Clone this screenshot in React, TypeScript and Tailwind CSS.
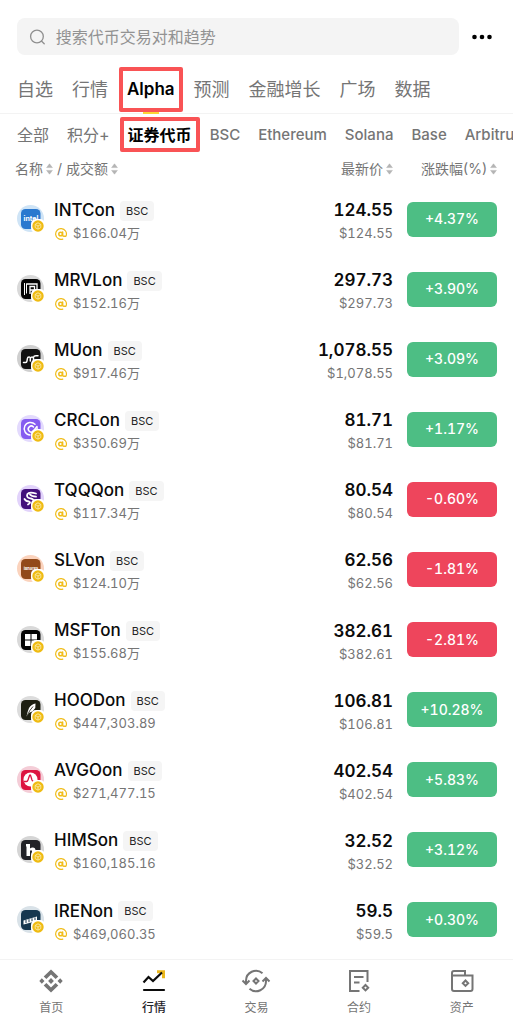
import type { ReactNode } from "react";

const tabs = ["自选", "行情", "Alpha", "预测", "金融增长", "广场", "数据"];

const filters = [
  { label: "全部", cjk: true },
  { label: "积分+", cjk: true },
  { label: "证券代币", cjk: true, active: true },
  { label: "BSC" },
  { label: "Ethereum" },
  { label: "Solana" },
  { label: "Base" },
  { label: "Arbitrum" },
];

type Token = {
  name: string;
  volume: string;
  price: string;
  change: string;
  halo: string;
  tile: string;
  glyph: ReactNode;
};

const tokens: Token[] = [
  {
    name: "INTCon",
    volume: "$166.04万",
    price: "124.55",
    change: "+4.37%",
    halo: "#cfe4f6",
    tile: "#2a78cf",
    glyph: (
      <text
        x="14"
        y="16"
        fontSize="7"
        fontWeight="700"
        fill="#fff"
        textAnchor="middle"
      >
        intel
      </text>
    ),
  },
  {
    name: "MRVLon",
    volume: "$152.16万",
    price: "297.73",
    change: "+3.90%",
    halo: "#d9d9d9",
    tile: "#050505",
    glyph: (
      <g fill="none" stroke="#fff">
        <path d="M7.500 8v12M9.500 8.500v10" strokeWidth="1" />
        <path d="M9.500 9H20v7M13 19v-7.500h4.500V15H13" strokeWidth="1.300" />
      </g>
    ),
  },
  {
    name: "MUon",
    volume: "$917.46万",
    price: "1,078.55",
    change: "+3.09%",
    halo: "#cfcfcf",
    tile: "#111111",
    glyph: (
      <path
        d="M6.500 17.500h2q1.300 0 1.500-1.600l.4-2.400q.2-1.500 1.600-1.500t1.300 1.500V16M13.300 14q.2-2 1.700-2t1.500 1.600v2M16.500 12.500q.3-1.800 2.500-1.800h2"
        fill="none"
        stroke="#fff"
        strokeWidth="1.500"
        strokeLinecap="round"
      />
    ),
  },
  {
    name: "CRCLon",
    volume: "$350.69万",
    price: "81.71",
    change: "+1.17%",
    halo: "#e3dafd",
    tile: "#855cf0",
    glyph: (
      <g fill="none" stroke="#fff" strokeWidth="1.500" strokeLinecap="round">
        <path d="M18 9.300a6.300 6.300 0 1 0-5 10.700" />
        <path d="M16.500 12a3 3 0 1 0-.2 4.300L20 11.500" />
        <path d="M20 12.500a6 6 0 0 1-.5 4" />
      </g>
    ),
  },
  {
    name: "TQQQon",
    volume: "$117.34万",
    price: "80.54",
    change: "-0.60%",
    halo: "#e2d3fb",
    tile: "#43107c",
    glyph: (
      <path
        d="M19 8.500q-7-2-8.500.5-1.500 3 2 4.200 4.500.8 4.500 3.300M7.500 14q1.500 2.500 4.500 2.500 2.500 1-1 3M13 9.500q1.500 2 6 2.200"
        fill="none"
        stroke="#fff"
        strokeWidth="1.800"
        strokeLinecap="round"
      />
    ),
  },
  {
    name: "SLVon",
    volume: "$124.10万",
    price: "62.56",
    change: "-1.81%",
    halo: "#fbd3bd",
    tile: "#924a1a",
    glyph: (
      <text
        x="14"
        y="15"
        fontSize="4"
        fontWeight="700"
        fill="#fff"
        textAnchor="middle"
      >
        iShares
      </text>
    ),
  },
  {
    name: "MSFTon",
    volume: "$155.68万",
    price: "382.61",
    change: "-2.81%",
    halo: "#d9d9d9",
    tile: "#050505",
    glyph: (
      <path
        d="M8 8h5.500v5.500H8zM14.500 8H20v5.500h-5.500zM8 14.500h5.500V20H8zM14.500 14.500H20V20h-5.500z"
        fill="#fff"
      />
    ),
  },
  {
    name: "HOODon",
    volume: "$447,303.89",
    price: "106.81",
    change: "+10.28%",
    halo: "#dcdcdc",
    tile: "#1d1f12",
    glyph: (
      <>
        <path
          d="M9.500 20.500q1-5 2.500-8.500 2.500-3.800 6.500-4.500l-.2 4.500-2.600 3.300-3.400 1.400z"
          fill="#fff"
        />
        <path
          d="M10 20q2.500-6 6-9.500"
          stroke="#1d1f12"
          strokeWidth=".8"
          fill="none"
        />
      </>
    ),
  },
  {
    name: "AVGOon",
    volume: "$271,477.15",
    price: "402.54",
    change: "+5.83%",
    halo: "#f4cdd7",
    tile: "#dc1440",
    glyph: (
      <>
        <circle cx="13.500" cy="13.500" r="7" fill="#fff" />
        <path
          d="M7 15.500h2.500q1 0 1.500-1.500l1.500-4.500q.6-1 1.100 0l1.400 4.500q.6 1.500 1.500 1.500H20"
          fill="none"
          stroke="#dc1440"
          strokeWidth="1.300"
        />
      </>
    ),
  },
  {
    name: "HIMSon",
    volume: "$160,185.16",
    price: "32.52",
    change: "+3.12%",
    halo: "#d5d5d5",
    tile: "#222328",
    glyph: (
      <path
        d="M9 8h4v4.500q1-1 2.800-1 2.700 0 2.700 3V20H15v-4.500q0-1.200-1-1.200t-1 1.200V20H9.500v-9.500H9z"
        fill="#fff"
      />
    ),
  },
  {
    name: "IRENon",
    volume: "$469,060.35",
    price: "59.5",
    change: "+0.30%",
    halo: "#d9e2e8",
    tile: "#15374f",
    glyph: (
      <>
        <path d="M6.500 14.500L20 10.500v4.500L6.500 18.500z" fill="#fff" />
        <path
          d="M9 14v3M12 13.200v3M15 12.300v3M18 11.500v3"
          stroke="#15374f"
          strokeWidth="1"
        />
      </>
    ),
  },
];

function TokenLogo({ token }: { token: Token }) {
  return (
    <svg
      className="size-7 shrink-0 overflow-visible"
      viewBox="0 0 28 28"
      fontFamily="Inter, sans-serif"
      aria-hidden="true"
    >
      <circle cx="13.500" cy="13.500" r="13.500" fill={token.halo} />
      <rect x="4" y="4" width="19.500" height="20" rx="4.500" fill={token.tile} />
      {token.glyph}
      <rect x="14" y="14" width="14" height="14" rx="5" fill="#fff" />
      <circle cx="21" cy="21" r="5.700" fill="#efbb12" />
      <path
        d="M21 17.800l2.800 1.600v3.200L21 24.200l-2.800-1.600v-3.200zM18.200 19.400L21 21l2.800-1.600M21 21v3"
        fill="none"
        stroke="#fbe9a6"
        strokeWidth=".9"
      />
    </svg>
  );
}

function AlphaMark() {
  return (
    <svg className="size-3 shrink-0" viewBox="0 0 12 12" aria-hidden="true">
      <g fill="none" stroke="#f0bd1c" strokeLinecap="round">
        <path d="M7.800 11.100A5.400 5.400 0 1 1 11.200 7.600" strokeWidth="1.200" />
        <circle cx="5.600" cy="6" r="1.800" strokeWidth="1.500" />
        <path d="M7.600 4v3q.2 1.400 1.300 1.300h1.800" strokeWidth="1.500" />
      </g>
    </svg>
  );
}

function SortArrows() {
  return (
    <svg className="h-3 w-[7px] shrink-0" viewBox="0 0 7 12" aria-hidden="true">
      <path
        d="M3.500.8l2.900 3.800H.6zM3.500 11.200L.6 7.400h5.800z"
        fill="#b4b4b4"
        stroke="#b4b4b4"
        strokeWidth=".5"
        strokeLinejoin="round"
      />
    </svg>
  );
}

function Highlight() {
  return (
    <span className="pointer-events-none absolute -inset-x-2 top-0 bottom-px rounded-xs border-4 border-[#f95355]" />
  );
}

const navItems = [
  {
    label: "首页",
    icon: (
      <path
        d="M16.600 13.900l2.700 2.700L12 23.500l-7.300-6.900 2.700-2.700 4.600 4.600zM21.200 9.300L23.700 12l-2.500 2.700L18.500 12zM12 9.100l2.900 2.900-2.900 2.900L9.100 12zM2.800 9.300L5.500 12l-2.700 2.700L.3 12zM12 .5l7.300 6.900-2.700 2.700L12 5.500l-4.600 4.600-2.700-2.700z"
        fill="#757575"
      />
    ),
  },
  {
    label: "行情",
    active: true,
    icon: (
      <>
        <path d="M15 1.200h8v8h-3V4.200h-5z" fill="#eab71c" />
        <path
          d="M1.500 13.500l5-5.500 4.500 4 9-8.500"
          fill="none"
          stroke="#0b0b0b"
          strokeWidth="2.200"
        />
        <path
          d="M2 21h20"
          stroke="#0b0b0b"
          strokeWidth="2.200"
          strokeLinecap="round"
        />
      </>
    ),
  },
  {
    label: "交易",
    icon: (
      <g fill="none" stroke="#757575" strokeWidth="2">
        <path d="M18.500 4.200A10 10 0 0 0 2 12v2" />
        <path d="M-1.500 11.500L2 15l3.500-3.500" />
        <path d="M5.500 19.800A10 10 0 0 0 22 12v-2" />
        <path d="M18.500 12.500L22 9l3.500 3.500" />
        <path d="M12 9.500l2.500 2.500-2.500 2.500L9.500 12z" />
      </g>
    ),
  },
  {
    label: "合约",
    icon: (
      <g fill="none" stroke="#757575" strokeWidth="2">
        <path d="M12.500 22H3V2h17.500v11" />
        <path d="M7 8h9.500M7 13.500h5.500" />
        <path d="M18.500 16l2.700 2.700-2.700 2.700-2.700-2.700z" />
      </g>
    ),
  },
  {
    label: "资产",
    icon: (
      <g fill="none" stroke="#757575" strokeWidth="2">
        <path d="M2 6.500h20.500V20q0 2-2 2H4q-2 0-2-2zM2 7V4q0-2 2-2h11v4.500" />
        <path d="M15.500 11.500l2.700 2.700-2.700 2.700-2.700-2.700z" />
      </g>
    ),
  },
];

export default function App() {
  return (
    <div className="flex min-h-screen flex-col overflow-x-hidden bg-white font-['Inter','Noto_Sans_CJK_SC',sans-serif] text-[#757575]">
      <header className="flex items-center gap-3 pt-4.5 pr-5 pl-[17px]">
        <label className="flex h-[37px] flex-1 items-center gap-2.5 rounded-lg bg-[#f4f4f4] px-3">
          <svg className="size-4.5" viewBox="0 0 18 18" aria-hidden="true">
            <g
              fill="none"
              stroke="#8f8f8f"
              strokeWidth="1.400"
              strokeLinecap="round"
            >
              <circle cx="8.500" cy="8.500" r="6.800" />
              <path d="M13.500 13.500l2.800 2.800" />
            </g>
          </svg>
          <input
            type="text"
            aria-label="搜索"
            placeholder="搜索代币交易对和趋势"
            className="h-full w-full bg-transparent text-base outline-none placeholder:text-[#929292]"
          />
        </label>
        <button type="button" aria-label="更多">
          <svg className="h-5 w-5.5" viewBox="0 0 22 20" fill="#000">
            <circle cx="3.500" cy="10" r="2.300" />
            <circle cx="11" cy="10" r="2.300" />
            <circle cx="18.500" cy="10" r="2.300" />
          </svg>
        </button>
      </header>

      <nav className="mt-3 flex h-[47px] gap-[19px] border-b border-[#f3f3f3] px-[17px] whitespace-nowrap">
        {tabs.map((tab) =>
          tab === "Alpha" ? (
            <button
              key={tab}
              type="button"
              className="relative text-[17px] font-semibold text-black"
            >
              {tab}
              <span className="absolute inset-x-4 -bottom-px h-1 bg-[#fcd535]" />
              <Highlight />
            </button>
          ) : (
            <button key={tab} type="button" className="text-lg">
              {tab}
            </button>
          )
        )}
      </nav>

      <div className="mt-[3px] flex h-9 gap-4.5 overflow-hidden pl-[17px] whitespace-nowrap">
        {filters.map((filter) => (
          <button
            key={filter.label}
            type="button"
            className={
              filter.active
                ? "relative text-base font-semibold text-black"
                : filter.cjk
                  ? "text-base"
                  : "text-[15px] font-medium"
            }
          >
            {filter.label}
            {filter.active && <Highlight />}
          </button>
        ))}
      </div>

      <main className="grid flex-1 pb-1">
        <table className="w-full table-fixed">
          <thead>
            <tr className="h-[31px] text-sm leading-5">
              <th className="pl-[15px] font-normal">
                <div className="flex items-center gap-1">
                  <button type="button" className="flex items-center gap-[3px]">
                    名称
                    <SortArrows />
                  </button>
                  /
                  <button type="button" className="flex items-center gap-[3px]">
                    成交额
                    <SortArrows />
                  </button>
                </div>
              </th>
              <th className="w-28 font-normal">
                <button
                  type="button"
                  className="ml-auto flex items-center gap-[3px]"
                >
                  最新价
                  <SortArrows />
                </button>
              </th>
              <th className="w-30 pr-4 font-normal">
                <button
                  type="button"
                  className="ml-auto flex items-center gap-[3px]"
                >
                  涨跌幅(%)
                  <SortArrows />
                </button>
              </th>
            </tr>
          </thead>
          <tbody>
            {tokens.map((token) => (
              <tr key={token.name} className="h-[70px]">
                <td className="pl-[17px]">
                  <div className="flex items-center gap-[9px]">
                    <TokenLogo token={token} />
                    <div className="pt-1.5">
                      <div className="flex h-[23px] items-center gap-[5px] text-[17px] font-medium text-[#0b0b0b]">
                        {token.name}
                        <span className="rounded-sm bg-[#f5f5f5] px-1.5 text-[11px] leading-5 font-normal text-[#222]">
                          BSC
                        </span>
                      </div>
                      <div className="flex h-[23px] items-center gap-1.5 pl-px text-[13px] tabular-nums">
                        <AlphaMark />
                        {token.volume}
                      </div>
                    </div>
                  </div>
                </td>
                <td className="pt-1.5 text-right tabular-nums">
                  <div className="text-[17px] leading-[23px] font-semibold text-[#0b0b0b]">
                    {token.price}
                  </div>
                  <div className="text-[13px] leading-[23px]">
                    ${token.price}
                  </div>
                </td>
                <td className="pr-4 pl-3.5">
                  <button
                    type="button"
                    className={`block h-[35px] w-full rounded-md text-sm font-medium text-white tabular-nums ${
                      token.change.startsWith("-")
                        ? "bg-[#ee455c]"
                        : "bg-[#4dbe84]"
                    }`}
                  >
                    {token.change}
                  </button>
                </td>
              </tr>
            ))}
          </tbody>
        </table>
      </main>

      <footer className="sticky bottom-0 grid h-[73px] grid-cols-5 border-t border-[#f3f3f3] bg-white pt-[9px]">
        {navItems.map((item) => (
          <a
            key={item.label}
            href="#"
            className={`flex flex-col items-center gap-[7px] text-xs ${
              item.active ? "font-medium text-[#1e2329]" : ""
            }`}
          >
            <svg
              className="size-6 overflow-visible"
              viewBox="0 0 24 24"
              aria-hidden="true"
            >
              {item.icon}
            </svg>
            {item.label}
          </a>
        ))}
      </footer>
    </div>
  );
}
